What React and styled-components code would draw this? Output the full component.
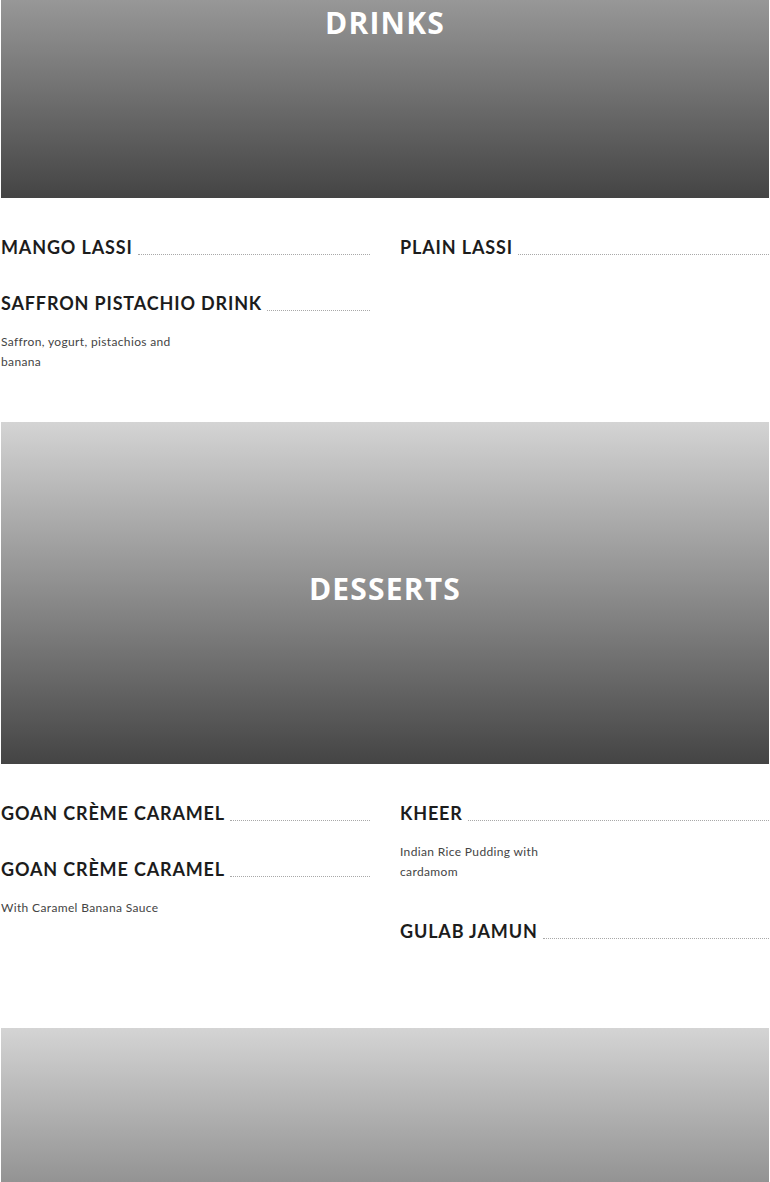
import React from "react";
import styled, { createGlobalStyle } from "styled-components";

const GlobalStyle = createGlobalStyle`
  html, body { margin: 0; padding: 0; background: #ffffff; }
  body { font-family: "Lato", "Liberation Sans", sans-serif; color: #1c1c1c; }
  * { box-sizing: border-box; }
`;

const Page = styled.main`
  width: 770px;
  padding: 0 1px;
  overflow: hidden;
`;

const Section = styled.section`
  display: flex;
  flex-direction: column;
`;

const BANNER_H = 342;

const Banner = styled.header`
  height: ${(p) => BANNER_H - (p.$crop || 0)}px;
  background: linear-gradient(180deg, #d4d4d4 0%, #444444 100%) bottom / 100% ${BANNER_H}px no-repeat;
  display: flex;
  flex-direction: column;
  align-items: center;
  justify-content: ${(p) => (p.$crop ? "flex-start" : "center")};
  padding-top: ${(p) => (p.$crop ? BANNER_H / 2 - p.$crop - 24 : 0)}px;
`;

const BannerTitle = styled.h2`
  margin: 0;
  padding-bottom: 8px;
  font-family: "Open Sans", "Noto Sans", sans-serif;
  font-weight: 700;
  font-size: 30px;
  line-height: 40px;
  letter-spacing: 1.2px;
  color: #ffffff;
  text-transform: uppercase;
`;

const MenuGrid = styled.div`
  display: grid;
  grid-template-columns: 1fr 1fr;
  column-gap: 30px;
  align-items: start;
  padding: 36px 0 ${(p) => p.$pb}px;
`;

const Column = styled.div`
  display: flex;
  flex-direction: column;
  gap: 30px;
`;

const Item = styled.article`
  display: flex;
  flex-direction: column;
`;

const TitleRow = styled.div`
  display: flex;
  align-items: flex-end;
`;

const ItemTitle = styled.h3`
  margin: 0;
  font-family: "Lato", sans-serif;
  font-weight: 700;
  font-size: 18px;
  line-height: 26px;
  letter-spacing: 0.85px;
  color: #1c1c1c;
  white-space: nowrap;
`;

const Leader = styled.span`
  flex: 1;
  margin: 0 0 5px 5px;
  border-bottom: 1px dotted #a8a8a8;
`;

const Description = styled.p`
  margin: 16px 0 6px;
  width: 50%;
  font-family: "Lato", sans-serif;
  font-weight: 400;
  font-size: 12px;
  line-height: 20px;
  letter-spacing: 0.35px;
  color: #444444;
`;

const MenuItem = ({ name, desc }) => (
  <Item>
    <TitleRow>
      <ItemTitle>{name}</ItemTitle>
      <Leader />
    </TitleRow>
    {desc && <Description>{desc}</Description>}
  </Item>
);

const sections = [
  {
    title: "Drinks",
    crop: 144,
    pb: 44,
    columns: [
      [
        { name: "MANGO LASSI" },
        { name: "SAFFRON PISTACHIO DRINK", desc: "Saffron, yogurt, pistachios and banana" },
      ],
      [{ name: "PLAIN LASSI" }],
    ],
  },
  {
    title: "Desserts",
    pb: 84,
    columns: [
      [
        { name: "GOAN CRÈME CARAMEL" },
        { name: "GOAN CRÈME CARAMEL", desc: "With Caramel Banana Sauce" },
      ],
      [
        { name: "KHEER", desc: "Indian Rice Pudding with cardamom" },
        { name: "GULAB JAMUN" },
      ],
    ],
  },
];

export default function App() {
  return (
    <Page>
      <GlobalStyle />
      {sections.map((s) => (
        <Section key={s.title}>
          <Banner $crop={s.crop}>
            <BannerTitle>{s.title}</BannerTitle>
          </Banner>
          <MenuGrid $pb={s.pb}>
            {s.columns.map((col, i) => (
              <Column key={i}>
                {col.map((it, j) => (
                  <MenuItem key={j} {...it} />
                ))}
              </Column>
            ))}
          </MenuGrid>
        </Section>
      ))}
      <Section>
        <Banner />
      </Section>
    </Page>
  );
}
